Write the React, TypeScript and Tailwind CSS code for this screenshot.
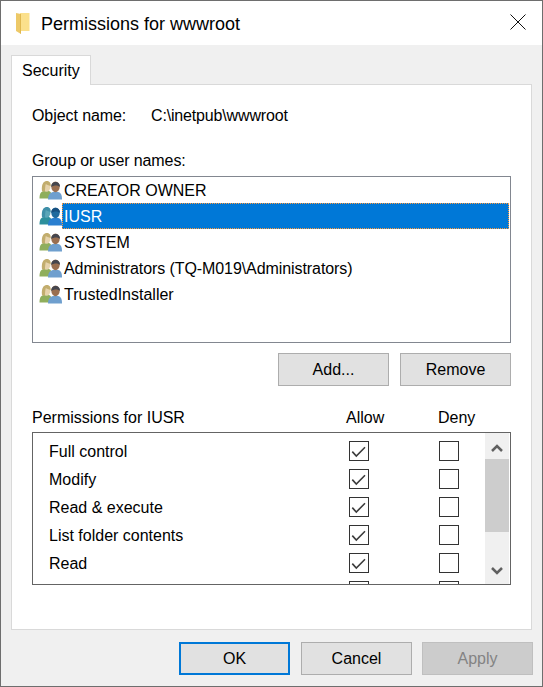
import React from 'react';

const UsersIcon = ({ selected }: { selected?: boolean }) => (
  <svg width="24" height="24" viewBox="0 0 24 24" className="shrink-0">
    <path d="M0.500 20.500 C0.500 15.500 2 13.500 5 13 L10 13 C12.500 14 13 16 13 20.500 Z" fill={selected ? '#2c8f9c' : '#8fae5c'} />
    <ellipse cx="7.500" cy="8.500" rx="4" ry="5.200" fill={selected ? '#5aa6b8' : '#e6d3ac'} />
    <path d="M3 13.500 C2 5 5.500 3 8 3 C10.800 3 12 5.500 11.700 8 C9.500 7.500 7.500 6.500 6.800 6 C6.300 8 6 10.500 6 13.500 Z" fill={selected ? '#3f8fa8' : '#c2ad6e'} />
    <path d="M9 21.500 C9 16.500 11.500 14.500 14 14 L19 14 C22 14.500 23 17 23 21.500 Z" fill={selected ? '#2a7fd0' : '#6f9fce'} />
    <ellipse cx="16.500" cy="8.800" rx="4.200" ry="5.400" fill={selected ? '#1f6a9e' : '#9a6f50'} />
    <path d="M12.300 9 C11.500 2.500 21.500 2 21 9 C19 7 15 7 12.300 9 Z" fill={selected ? '#175080' : '#45464e'} />
  </svg>
);

const CheckBox = ({ checked }: { checked?: boolean }) => (
  <div className="w-5 h-5 border border-[#333333] bg-white flex items-center justify-center">
    {checked && (
      <svg width="18" height="18" viewBox="0 0 18 18">
        <path d="M2.300 9.600 L6.300 14 L15 5.300" fill="none" stroke="#3c3c3c" strokeWidth="1.600" />
      </svg>
    )}
  </div>
);

const Btn = ({ label, primary, disabled }: { label: string; primary?: boolean; disabled?: boolean }) => (
  <button
    className={
      'w-[111px] h-[33px] text-[16px] ' +
      (primary
        ? 'border-2 border-[#0078d7] bg-[#e1e1e1] text-black'
        : disabled
        ? '-ml-px border border-[#bfbfbf] bg-[#cccccc] text-[#838383]'
        : 'border border-[#adadad] bg-[#e1e1e1] text-black')
    }
  >
    {label}
  </button>
);

const users = ['CREATOR OWNER', 'IUSR', 'SYSTEM', 'Administrators (TQ-M019\\Administrators)', 'TrustedInstaller'];

// last row is scrolled out of view, only the tops of its boxes show
const perms = [
  { name: 'Full control', allow: true },
  { name: 'Modify', allow: true },
  { name: 'Read & execute', allow: true },
  { name: 'List folder contents', allow: true },
  { name: 'Read', allow: true },
  { name: '', allow: false },
];

export default function App() {
  return (
    <div className="w-[543px] h-[687px] bg-[#f0f0f0] border border-[#6e6e6e] flex flex-col overflow-hidden font-['Liberation_Sans',sans-serif] text-[16px] leading-none text-black">
      {/* title bar */}
      <div className="h-[44px] bg-white flex items-center shrink-0">
        <svg width="16" height="22" viewBox="0 0 16 22" className="ml-[14px] mt-[1px]">
          <path d="M1 0 L6 1 L6 21 L1 18 Z" fill="#edc968" />
          <path d="M5 0 L14.500 0 L14.500 18 L5 18 Z" fill="#fbe08c" />
          <path d="M5 1 L6 1 L6 21 L5 20 Z" fill="#e0b850" />
        </svg>
        <span className="ml-[10px] mt-[2px] text-[18px]">Permissions for wwwroot</span>
        <svg width="16" height="16" viewBox="0 0 16 16" className="ml-auto mr-[16px] mt-[-3px]">
          <path d="M0.500 0.500 L15.500 15.500 M15.500 0.500 L0.500 15.500" stroke="#111111" strokeWidth="1" />
        </svg>
      </div>

      <div className="px-[10px] pt-[10px] flex flex-col">
        <div className="relative z-10 w-[80px] h-[30px] bg-white border border-b-0 border-[#d9d9d9] flex items-center pl-[10px]">
          Security
        </div>
        <div className="mt-[-1px] w-[521px] h-[546px] bg-white border border-[#d9d9d9] px-[20px] flex flex-col">
          <div className="flex mt-[22px] h-[18px] items-center">
            <span className="w-[119px] tracking-[-0.08px]">Object name:</span>
            <span className="tracking-[-0.16px]">C:\inetpub\wwwroot</span>
          </div>
          <div className="mt-[27px] h-[18px] flex items-center tracking-[-0.1px]">Group or user names:</div>

          <div className="mt-[6px] w-[479px] h-[167px] border border-[#828790] pl-[6px] pr-[1px]">
            {users.map((u, i) => (
              <div key={u} className="h-[26px] flex items-center">
                <UsersIcon selected={i === 1} />
                <div
                  className={
                    '-ml-px flex-1 h-[26px] flex items-center pl-[1px] pt-[2px] border ' +
                    (i === 1
                      ? 'bg-[#0078d7] text-white border-dotted border-[#ff9a3c]'
                      : 'border-transparent') +
                    (i === 3 ? ' tracking-[-0.08px]' : '')
                  }
                >
                  {u}
                </div>
              </div>
            ))}
          </div>

          <div className="mt-[10px] w-[479px] flex justify-end gap-[11px]">
            <Btn label="Add..." />
            <Btn label="Remove" />
          </div>

          <div className="mt-[23px] w-[479px] h-[18px] flex items-center">
            <span className="w-[314px]">Permissions for IUSR</span>
            <span className="w-[92px]">Allow</span>
            <span>Deny</span>
          </div>

          <div className="mt-[5px] w-[479px] h-[153px] border border-[#646464] flex overflow-hidden">
            <div className="flex-1 overflow-hidden pt-[4px]">
              {perms.map((p, i) => (
                <div key={i} className="h-[28px] flex items-center shrink-0">
                  <span className="ml-[16px] w-[300px] pt-[2px]">{p.name}</span>
                  <CheckBox checked={p.allow} />
                  <div className="w-[70px]" />
                  <CheckBox />
                </div>
              ))}
            </div>
            <div className="w-[24px] mr-px bg-[#f0f0f0] flex flex-col items-center justify-between shrink-0">
              <div className="h-[26px] flex items-start justify-center pt-[11px]">
                <svg width="12" height="8" viewBox="0 0 12 8">
                  <path d="M1 7 L6 2 L11 7" fill="none" stroke="#606060" strokeWidth="2.500" />
                </svg>
              </div>
              <div className="w-full h-[73px] bg-[#cdcdcd]" />
              <div className="h-[52px] w-full flex items-end justify-center pb-[9px]">
                <svg width="12" height="8" viewBox="0 0 12 8">
                  <path d="M1 1 L6 6 L11 1" fill="none" stroke="#606060" strokeWidth="2.500" />
                </svg>
              </div>
            </div>
          </div>
        </div>

        <div className="mt-[12px] flex justify-end gap-[11px] w-[522px]">
          <Btn label="OK" primary />
          <Btn label="Cancel" />
          <Btn label="Apply" disabled />
        </div>
      </div>
    </div>
  );
}
